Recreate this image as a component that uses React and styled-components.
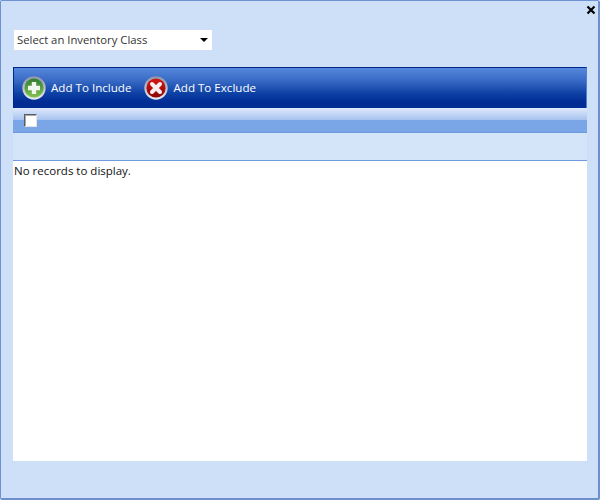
import React from "react";
import styled, { createGlobalStyle } from "styled-components";

const Global = createGlobalStyle`
  html, body { margin: 0; padding: 0; }
  body { font-family: "Open Sans", "Noto Sans", "Liberation Sans", sans-serif; }
`;

const Win = styled.div`
  box-sizing: border-box;
  width: 600px;
  height: 500px;
  background: #cedff8;
  border: 1px solid #6f93d2;
  border-right: 2px solid #6f8fcc;
  border-bottom: 2px solid #6f8fcc;
  border-radius: 2px;
  padding: 0 11px 0 12px;
  display: flex;
  flex-direction: column;
`;

const TitleRow = styled.div`
  height: 29px;
  display: flex;
  justify-content: flex-end;
  padding: 4px 0 0;
  margin-right: -9px;
  box-sizing: border-box;
`;

const Picker = styled.div`
  box-sizing: border-box;
  width: 198px;
  height: 20px;
  margin-left: 1px;
  background: #fff;
  display: flex;
  align-items: center;
  justify-content: space-between;
  padding: 0 4px 1px 3px;
  font-size: 11.3px;
  color: #333;
`;

const Caret = styled.span`
  width: 0;
  height: 0;
  border-left: 4px solid transparent;
  border-right: 4px solid transparent;
  border-top: 4px solid #000;
`;

const Toolbar = styled.div`
  box-sizing: border-box;
  margin-top: 17px;
  height: 41px;
  border: 1px solid #00268c;
  border-right: 1px solid #4f7fd6;
  border-bottom: none;
  background: linear-gradient(#5688dc 0%, #3a6bc6 30%, #0f43a6 62%, #002c94 85%, #002c94 100%);
  display: flex;
  align-items: center;
  padding-left: 8px;
  gap: 13px;
`;

const ToolButton = styled.div`
  display: flex;
  align-items: center;
  gap: 5px;
  color: #fff;
  font-size: 11.6px;
  padding-bottom: 1px;
`;

const HeaderBar = styled.div`
  box-sizing: border-box;
  height: 25px;
  background: linear-gradient(#dfeafb 0%, #a6c2ef 50%, #7aa6e8 52%, #7aa6e8 100%);
  border-bottom: 1px solid #6f9ade;
  padding: 6px 0 0 11px;
`;

const Check = styled.div`
  box-sizing: border-box;
  width: 13px;
  height: 13px;
  background: #fff;
  border: 1px solid #5c5c5c;
  border-right-color: #e4e4e4;
  border-bottom-color: #e4e4e4;
  box-shadow: inset 1px 1px 0 #a8a8a8;
`;

const FilterRow = styled.div`
  height: 27px;
  background: #d5e5f9;
  border-bottom: 1px solid #6f9ade;
`;

const Body = styled.div`
  height: 300px;
  background: #fff;
  padding: 2px 1px;
  box-sizing: border-box;
  font-size: 11.5px;
  line-height: 16px;
  color: #111;
`;

const Glossy = ({ id, light, dark, children }) => (
  <svg width="24" height="24" viewBox="0 0 24 24">
    <defs>
      <linearGradient id={id} x1="0" y1="0" x2="0" y2="1">
        <stop offset="0" stopColor={light} />
        <stop offset="1" stopColor={dark} />
      </linearGradient>
      <linearGradient id={id + "r"} x1="0" y1="0" x2="0" y2="1">
        <stop offset="0" stopColor="#8a94a8" />
        <stop offset="1" stopColor="#e8ebf0" />
      </linearGradient>
    </defs>
    <circle cx="12" cy="12" r="11.7" fill={`url(#${id}r)`} />
    <circle cx="12" cy="12" r="9.6" fill={`url(#${id})`} />
    {children}
  </svg>
);

export default function App() {
  return (
    <>
      <Global />
      <Win>
        <TitleRow>
          <svg width="10" height="10" viewBox="0 0 10 10">
            <path d="M1.5 1.5 L8.5 8.5 M8.5 1.5 L1.5 8.5" stroke="#000" strokeWidth="2.2" />
          </svg>
        </TitleRow>
        <Picker>
          Select an Inventory Class
          <Caret />
        </Picker>
        <Toolbar>
          <ToolButton>
            <Glossy id="gr" light="#2f7d35" dark="#84c44c">
              <path d="M12 6v12M6 12h12" stroke="#f2f6f0" strokeWidth="4.4" />
            </Glossy>
            Add To Include
          </ToolButton>
          <ToolButton>
            <Glossy id="rd" light="#d81414" dark="#8c0606">
              <path d="M8 8l8 8M16 8l-8 8" stroke="#f6eeee" strokeWidth="4" strokeLinecap="round" />
            </Glossy>
            Add To Exclude
          </ToolButton>
        </Toolbar>
        <HeaderBar>
          <Check />
        </HeaderBar>
        <FilterRow />
        <Body>No records to display.</Body>
      </Win>
    </>
  );
}
